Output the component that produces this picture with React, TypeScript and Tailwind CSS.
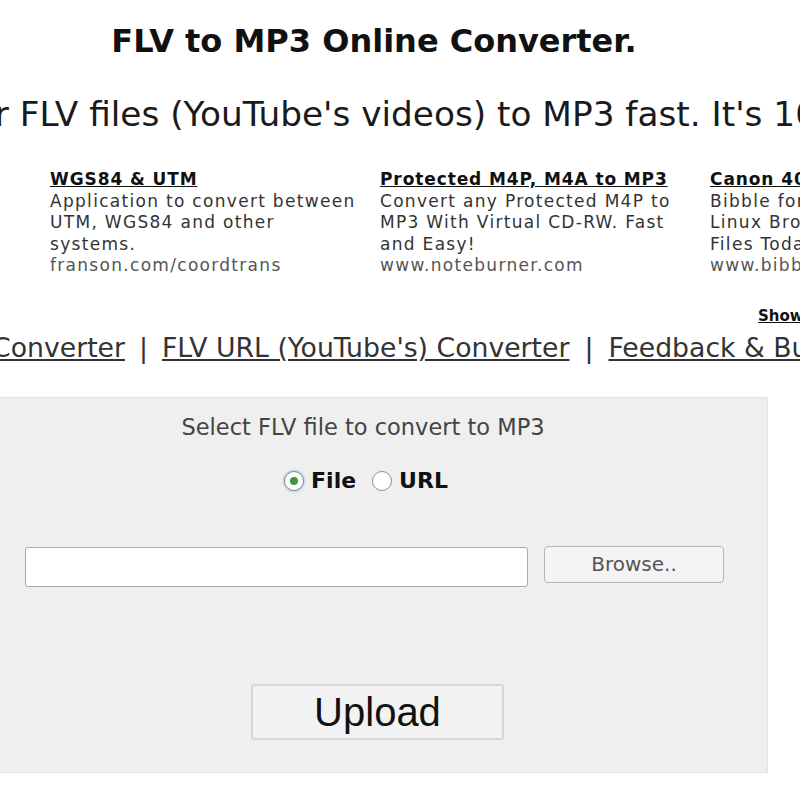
const ads = [
  {
    title: 'Free FLV Player',
    lines: ['Play FLV files on a PC.', 'Download it now, no', 'registration.'],
    url: 'www.flvplayer.net',
  },
  {
    title: 'WGS84 & UTM',
    lines: ['Application to convert between', 'UTM, WGS84 and other', 'systems.'],
    url: 'franson.com/coordtrans',
  },
  {
    title: 'Protected M4P, M4A to MP3',
    lines: ['Convert any Protected M4P to', 'MP3 With Virtual CD-RW. Fast', 'and Easy!'],
    url: 'www.noteburner.com',
  },
  {
    title: 'Canon 40D RAW Files',
    lines: ['Bibble for Windows, Mac, and', 'Linux Browse & Convert RAW', 'Files Today!'],
    url: 'www.bibblelabs.com',
  },
];

function Radio({ checked }: { checked?: boolean }) {
  return (
    <span
      className={
        checked
          ? 'w-[20px] h-[20px] rounded-full border border-[#7a8a99] bg-white flex items-center justify-center shadow-[0_0_2px_1px_#b9d3e6]'
          : 'w-[20px] h-[20px] rounded-full border border-[#8e8e8e] bg-white flex items-center justify-center'
      }
    >
      {checked && <span className="w-[8px] h-[8px] rounded-full bg-[#3a9a3a]" />}
    </span>
  );
}

export default function App() {
  return (
    <div className="w-[800px] h-[800px] overflow-hidden bg-white font-['DejaVu_Sans',sans-serif] text-[#111]">
      {/* heading */}
      <div className="w-[748px] flex justify-center pt-[23px] whitespace-nowrap">
        <h1 className="text-[32px] leading-[36px] font-bold">FLV to MP3 Online Converter.</h1>
      </div>

      <div className="w-[746px] flex justify-center mt-[35px] whitespace-nowrap">
        <p className="text-[34.3px] leading-[40px] text-[#1a1a1a]">
          Convert your FLV files (YouTube's videos) to MP3 fast. It's 100% free.
        </p>
      </div>

      {/* ads */}
      <div className="flex ml-[-280px] mt-[35px] whitespace-nowrap">
        {ads.map((ad) => (
          <div key={ad.title} className="w-[330px] shrink-0 text-[17px] leading-[21.5px] tracking-[1.3px] text-[#333]">
            <a href="#" className="font-bold underline text-[#111] tracking-[0.9px]">
              {ad.title}
            </a>
            {ad.lines.map((l) => (
              <div key={l}>{l}</div>
            ))}
            <div className="text-[#555]">{ad.url}</div>
          </div>
        ))}
      </div>

      <div className="flex pl-[758px] mt-[30px] whitespace-nowrap">
        <a href="#" className="text-[15px] leading-[18px] font-bold underline text-[#111]">
          Show all
        </a>
      </div>

      {/* nav */}
      <div className="flex items-center whitespace-nowrap text-[26.7px] leading-[32px] text-[#333] mt-[7px]">
        <div className="w-[125px] shrink-0 flex justify-end">
          <a href="#" className="underline">FLV File Converter</a>
        </div>
        <span className="w-[37px] shrink-0 text-center">|</span>
        <a href="#" className="underline shrink-0">FLV URL (YouTube's) Converter</a>
        <span className="w-[39px] shrink-0 text-center">|</span>
        <a href="#" className="underline shrink-0">Feedback &amp; Bug report</a>
      </div>

      {/* converter box */}
      <div className="ml-[-42px] w-[810px] mt-[33px] bg-[#efefef] border border-[#e2e2e2] pt-[15px] pb-[32px]">
        <div className="text-center text-[22.5px] leading-[28px] text-[#444]">Select FLV file to convert to MP3</div>

        <div className="flex justify-center items-center gap-[7px] mt-[27px] text-[22px] leading-[26px] font-bold text-[#111] pl-[6px]">
          <Radio checked />
          <span>File</span>
          <span className="w-[2px]" />
          <Radio />
          <span>URL</span>
        </div>

        <div className="flex items-start mt-[53px] pl-[66px]">
          <div className="w-[503px] h-[40px] bg-white border border-[#a9a9a9] rounded-[3px]" />
          <button className="ml-[16px] mt-[-1px] w-[180px] h-[37px] rounded-[4px] border border-[#b5b5b5] bg-[#f4f4f4] text-[20px] text-[#555]">
            Browse..
          </button>
        </div>

        <div className="flex pl-[292px] mt-[97px]">
          <button className="w-[253px] h-[56px] rounded-[3px] border-2 border-[#d6d6d6] bg-[#f2f2f2] font-['Liberation_Sans',sans-serif] text-[40px] leading-[40px] text-[#111]">
            Upload
          </button>
        </div>
      </div>
    </div>
  );
}
